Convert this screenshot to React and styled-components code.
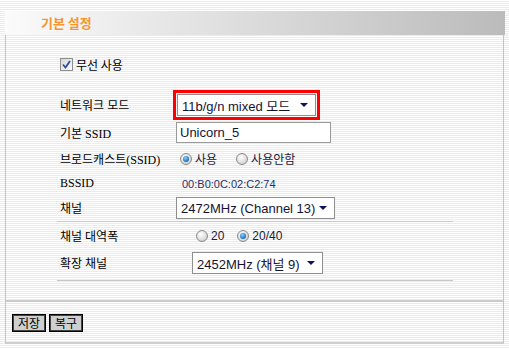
import React from 'react';
import styled, { createGlobalStyle } from 'styled-components';

const GlobalStyle = createGlobalStyle`
    html, body {
        margin: 0;
        padding: 0;
    }
    body {
        width: 509px;
        height: 348px;
        overflow: hidden;
        background: repeating-linear-gradient(to bottom, #ffffff 0px, #ffffff 1px, #ebebeb 1px, #ebebeb 2px);
        font-family: "Noto Sans CJK KR", "Liberation Sans", sans-serif;
        font-size: 12px;
        color: #000;
    }
`;

const Panel = styled.div`
    margin: 11px 0 0 5px;
    width: 500px;
`;

const Header = styled.div`
    height: 24px;
    line-height: 24px;
    padding-left: 36px;
    background: linear-gradient(to right, #fbfbfb, #bbbbbb);
    color: #f5962e;
    font-weight: bold;
    font-size: 13px;
`;

const Body = styled.div`
    width: 497px;
    border-left: 1px solid #c4c4c4;
    border-right: 1px solid #c4c4c4;
    border-bottom: 2px solid #cfcfcf;
`;

const Section = styled.div`
    padding: 23px 0 0 51px;
`;

const CheckRow = styled.label`
    display: flex;
    align-items: center;
    gap: 3px;
    height: 13px;
    padding-left: 3px;
    margin-bottom: 19px;
    line-height: 13px;
`;

const Box = styled.span`
    width: 11px;
    height: 11px;
    border: 1px solid #8d8e8f;
    background: linear-gradient(135deg, #d6d6d6, #fbfbfb);
    display: flex;
    align-items: center;
    justify-content: center;
`;

const Table = styled.div`
    width: 396px;
    display: grid;
    grid-template-columns: ${p => p.$label}px 1fr;
`;

const Label = styled.div`
    height: ${p => p.$h}px;
    display: flex;
    align-items: center;
    padding-left: 3px;
    font-family: "Liberation Serif", "Noto Sans CJK KR", serif;
    font-size: 12px;
    white-space: nowrap;
`;

const Value = styled.div`
    height: ${p => p.$h}px;
    display: flex;
    align-items: center;
    padding-left: ${p => p.$pad || 0}px;
`;

const Divider = styled.div`
    width: 396px;
    height: 1px;
    background: #c8c8c8;
    margin-top: ${p => p.$top || 0}px;
`;

const Highlight = styled.div`
    border: 3px solid #ff0000;
    padding: 1px;
    display: flex;
`;

const SelectBox = styled.div`
    box-sizing: border-box;
    width: ${p => p.$w}px;
    height: 22px;
    border: 1px solid #8f8f8f;
    background: #fff;
    display: flex;
    align-items: center;
    justify-content: space-between;
    padding: 0 7px 0 4px;
    font-family: "Liberation Sans", "Noto Sans CJK KR", sans-serif;
    font-size: 13px;
    color: #141432;
    white-space: nowrap;
`;

const Arrow = styled.span`
    width: 0;
    height: 0;
    border-left: 4px solid transparent;
    border-right: 4px solid transparent;
    border-top: 4px solid #101060;
`;

const TextInput = styled.div`
    box-sizing: border-box;
    width: 155px;
    height: 21px;
    margin-left: 3px;
    border: 1px solid #9a9a9a;
    background: #fff;
    padding-left: 3px;
    display: flex;
    align-items: center;
    font-family: "Liberation Sans", sans-serif;
    font-size: 13px;
    color: #141432;
`;

const RadioGroup = styled.div`
    display: flex;
    align-items: center;
`;

const RadioItem = styled.label`
    display: flex;
    align-items: center;
    gap: 3px;
    margin-right: ${p => p.$gap}px;
    font-family: "Liberation Sans", "Noto Sans CJK KR", sans-serif;
    font-size: 12px;
    color: #1a1a3a;
`;

const Circle = styled.span`
    box-sizing: border-box;
    width: 12px;
    height: 12px;
    border-radius: 50%;
    border: 1px solid #8a8a8a;
    background: radial-gradient(circle at 40% 35%, #ffffff, #d0d0d0 80%);
    display: flex;
    align-items: center;
    justify-content: center;
`;

const Dot = styled.span`
    width: 6px;
    height: 6px;
    border-radius: 50%;
    background: radial-gradient(circle at 40% 35%, #8fd0ff, #1a6cb8 70%, #0d3f78);
`;

const Bssid = styled.span`
    padding-left: 9px;
    font-family: "Liberation Sans", sans-serif;
    font-size: 11px;
    color: #1f2f6a;
`;

const Footer = styled.div`
    margin-top: 19px;
    border-top: 2px solid #cbcbcb;
    padding: 12px 0 10px 6px;
    display: flex;
    gap: 3px;
`;

const Button = styled.button`
    box-sizing: border-box;
    width: 34px;
    height: 18px;
    padding: 0;
    background: #cfcfcf;
    border: 1px solid #000;
    box-shadow: inset 1px 1px 0 #444, inset -1px -1px 0 #444;
    font-family: "Noto Sans CJK KR", sans-serif;
    font-size: 12px;
    line-height: 14px;
    color: #000;
`;

const Radio = ({ checked, label, gap }) => (
    <RadioItem $gap={gap}>
        <Circle>{checked && <Dot />}</Circle>
        {label}
    </RadioItem>
);

const Select = ({ width, children }) => (
    <SelectBox $w={width}>
        <span>{children}</span>
        <Arrow />
    </SelectBox>
);

export default function App() {
    return (
        <>
            <GlobalStyle />
            <Panel>
                <Header>기본 설정</Header>
                <Body>
                    <Section>
                        <CheckRow>
                            <Box>
                                <svg width="9" height="9" viewBox="0 0 9 9">
                                    <path d="M1 4.5 L3.5 7.5 L8 1" fill="none" stroke="#2b4ea6" strokeWidth="1.8" />
                                </svg>
                            </Box>
                            무선 사용
                        </CheckRow>

                        <Table $label={116}>
                            <Label $h={30}>네트워크 모드</Label>
                            <Value $h={30}>
                                <Highlight>
                                    <Select width={139}>11b/g/n mixed 모드</Select>
                                </Highlight>
                            </Value>

                            <Label $h={25}>기본 SSID</Label>
                            <Value $h={25}>
                                <TextInput>Unicorn_5</TextInput>
                            </Value>

                            <Label $h={27}>브로드캐스트(SSID)</Label>
                            <Value $h={27} $pad={7}>
                                <RadioGroup>
                                    <Radio checked label="사용" gap={19} />
                                    <Radio label="사용안함" gap={0} />
                                </RadioGroup>
                            </Value>

                            <Label $h={23}>BSSID</Label>
                            <Value $h={23}>
                                <Bssid>00:B0:0C:02:C2:74</Bssid>
                            </Value>

                            <Label $h={26}>채널</Label>
                            <Value $h={26} $pad={3}>
                                <Select width={159}>2472MHz (Channel 13)</Select>
                            </Value>
                        </Table>
                        <Divider />

                        <Table $label={135}>
                            <Label $h={28}>채널 대역폭</Label>
                            <Value $h={28} $pad={4}>
                                <RadioGroup>
                                    <Radio label="20" gap={13} />
                                    <Radio checked label="20/40" gap={0} />
                                </RadioGroup>
                            </Value>

                            <Label $h={26}>확장 채널</Label>
                            <Value $h={26}>
                                <Select width={131}>2452MHz (채널 9)</Select>
                            </Value>
                        </Table>
                        <Divider $top={4} />
                    </Section>

                    <Footer>
                        <Button>저장</Button>
                        <Button>복구</Button>
                    </Footer>
                </Body>
            </Panel>
        </>
    );
}
